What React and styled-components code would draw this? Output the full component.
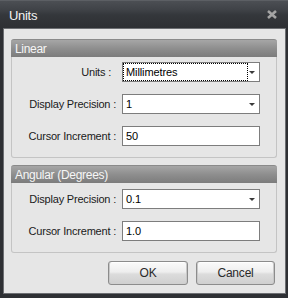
import React from "react";
import styled, { createGlobalStyle } from "styled-components";

const GlobalStyle = createGlobalStyle`
  html, body {
    margin: 0;
    padding: 0;
    background: #2e3034;
  }
  body {
    font-family: "Liberation Sans", Arial, sans-serif;
  }
`;

const Window = styled.div`
  width: 288px;
  height: 298px;
  box-sizing: border-box;
  background: #2e3034;
  display: flex;
  flex-direction: column;
  padding: 0 2px 4px 3px;
`;

const TitleBar = styled.div`
  height: 28px;
  flex: none;
  margin: 0 -2px 0 -3px;
  padding: 0 11px 0 9px;
  display: flex;
  align-items: center;
  justify-content: space-between;
  background: linear-gradient(#4c4f54 0px, #3f4247 9px, #34373b 14px, #2d2f33 28px);
  border-top: 1px solid #5c5f64;
  box-sizing: border-box;
`;

const Title = styled.span`
  color: #f2f2f2;
  font-size: 13px;
  letter-spacing: -0.3px;
  padding-top: 1px;
`;

const Content = styled.div`
  flex: 1;
  background: #e6e6e6;
  border: 1px solid #6c6e72;
  padding: 10px 8px 0 7px;
  display: flex;
  flex-direction: column;
`;

const Group = styled.div`
  display: flex;
  flex-direction: column;
  margin-bottom: ${(p) => p.$gap || 0}px;
`;

const GroupHeader = styled.div`
  height: 18px;
  box-sizing: border-box;
  border-radius: 3px 3px 0 0;
  background: linear-gradient(#a6a6a6, #8e8e8e 50%, #7c7c7c);
  border-top: 1px solid #8a8a8a;
  color: #f6f6f6;
  font-size: 12px;
  letter-spacing: -0.3px;
  padding: 2px 0 0 4px;
`;

const GroupBody = styled.div`
  border: 1px solid #c4c4c4;
  border-top: none;
  border-radius: 0 0 3px 3px;
  padding: ${(p) => p.$top}px 0 11px;
  display: flex;
  flex-direction: column;
  gap: 12px;
`;

const Row = styled.div`
  display: grid;
  grid-template-columns: 104px 138px;
  column-gap: 6px;
  align-items: center;
  height: 20px;
`;

const Label = styled.label`
  text-align: right;
  font-size: 11px;
  letter-spacing: -0.2px;
  color: #1a1a1a;
  padding-right: ${(p) => p.$inset || 0}px;
  white-space: nowrap;
`;

const Field = styled.div`
  height: 20px;
  box-sizing: border-box;
  background: #fff;
  border: 1px solid #7d7d7d;
  display: flex;
  align-items: center;
  font-size: 11px;
  letter-spacing: -0.1px;
  color: #000;
  padding: 0 0 0 3px;
  position: relative;
`;

const Value = styled.span`
  flex: 1;
  line-height: 16px;
`;

const Focus = styled.span`
  position: absolute;
  left: 0;
  top: 0;
  bottom: 0;
  right: 11px;
  border: 1px dotted #000;
  pointer-events: none;
`;

const Arrow = styled.span`
  width: 0;
  height: 0;
  border-left: 3px solid transparent;
  border-right: 3px solid transparent;
  border-top: 3px solid #3a3a3a;
  margin: 0 4px 0 0;
`;

const Footer = styled.div`
  display: flex;
  justify-content: flex-end;
  gap: 8px;
  margin-top: 8px;
  padding-right: 2px;
`;

const Button = styled.button`
  width: ${(p) => p.$w}px;
  height: 24px;
  border: 1px solid #8c8c8c;
  border-radius: 3px;
  background: linear-gradient(#fbfbfb, #eeeeee 45%, #dcdcdc 55%, #cfcfcf);
  box-shadow: inset 1px 0 0 #c8c8c8, inset -1px 0 0 #c8c8c8, inset 0 1px 0 #ffffff;
  font-family: "Liberation Sans", Arial, sans-serif;
  font-size: 12px;
  letter-spacing: -0.2px;
  color: #2a2a2a;
  padding: 0;
`;

const Close = () => (
  <svg width="10" height="9" viewBox="0 0 10 9">
    <path d="M1 1 L9 8 M9 1 L1 8" stroke="#a4a4a4" strokeWidth="2.6" />
  </svg>
);

const Select = ({ value, focused }) => (
  <Field>
    <Value>{value}</Value>
    {focused && <Focus />}
    <Arrow />
  </Field>
);

export default function App() {
  return (
    <>
      <GlobalStyle />
      <Window>
        <TitleBar>
          <Title>Units</Title>
          <Close />
        </TitleBar>
        <Content>
          <Group $gap={7}>
            <GroupHeader>Linear</GroupHeader>
            <GroupBody $top={5}>
              <Row>
                <Label $inset={5}>Units :</Label>
                <Select value="Millimetres" focused />
              </Row>
              <Row>
                <Label>Display Precision :</Label>
                <Select value="1" />
              </Row>
              <Row>
                <Label>Cursor Increment :</Label>
                <Field>
                  <Value>50</Value>
                </Field>
              </Row>
            </GroupBody>
          </Group>
          <Group>
            <GroupHeader>Angular (Degrees)</GroupHeader>
            <GroupBody $top={6}>
              <Row>
                <Label>Display Precision :</Label>
                <Select value="0.1" />
              </Row>
              <Row>
                <Label>Cursor Increment :</Label>
                <Field>
                  <Value>1.0</Value>
                </Field>
              </Row>
            </GroupBody>
          </Group>
          <Footer>
            <Button $w={80}>OK</Button>
            <Button $w={79}>Cancel</Button>
          </Footer>
        </Content>
      </Window>
    </>
  );
}
